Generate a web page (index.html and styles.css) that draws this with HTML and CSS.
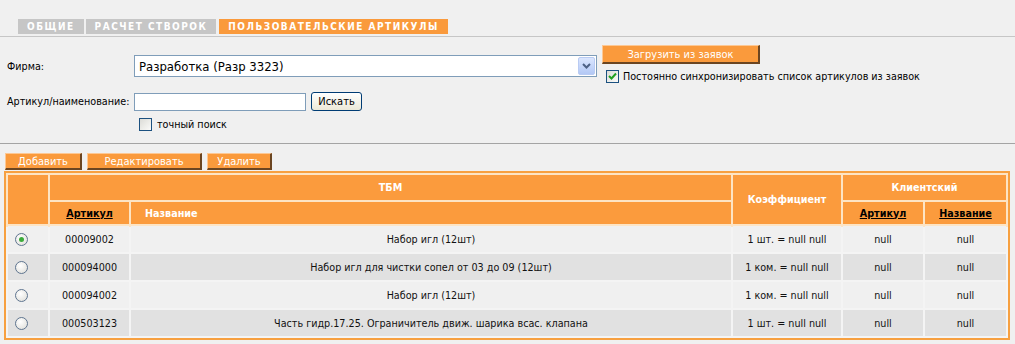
FILE: index.html
```html
<!DOCTYPE html>
<html lang="ru">
    <head>
        <meta charset="UTF-8">
        <title>Пользовательские артикулы</title>
        <link rel="stylesheet" href="styles.css">
    </head>
    <body>
        <div class="tabs">
            <span class="tab">Общие</span>
            <span class="tab">Расчет створок</span>
            <span class="tab active">Пользовательские артикулы</span>
        </div>

        <div class="filters">
            <div class="firm-row">
                <span class="label firm-label">Фирма:</span>
                <div class="select">
                    <span class="select-value">Разработка (Разр 3323)</span>
                    <span class="select-arrow">
                        <svg width="9" height="6" viewBox="0 0 9 6"><path d="M1 1 L4.5 4.5 L8 1" fill="none" stroke="#4d6185" stroke-width="2"/></svg>
                    </span>
                </div>
                <div class="sync">
                    <button class="btn load-btn">Загрузить из заявок</button>
                    <div class="check-line">
                        <span class="checkbox">
                            <svg width="11" height="11" viewBox="0 0 11 11"><path d="M2 5 L4.5 7.5 L9 2.5" fill="none" stroke="#21a121" stroke-width="2"/></svg>
                        </span>
                        Постоянно синхронизировать список артикулов из заявок
                    </div>
                </div>
            </div>
            <div class="search-row">
                <span class="label">Артикул/наименование:</span>
                <input class="text-input" type="text">
                <button class="xp-btn">Искать</button>
            </div>
            <div class="exact-row">
                <span class="checkbox"></span>
                точный поиск
            </div>
        </div>

        <div class="actions">
            <button class="btn add-btn">Добавить</button>
            <button class="btn edit-btn">Редактировать</button>
            <button class="btn del-btn">Удалить</button>
        </div>

        <table class="grid">
            <colgroup>
                <col class="c-radio">
                <col class="c-art">
                <col class="c-name">
                <col class="c-coef">
                <col class="c-cart">
                <col class="c-cname">
            </colgroup>
            <thead>
                <tr class="head-top">
                    <th rowspan="2"></th>
                    <th colspan="2">ТБМ</th>
                    <th rowspan="2">Коэффициент</th>
                    <th colspan="2">Клиентский</th>
                </tr>
                <tr class="head-sub">
                    <th><a href="#">Артикул</a></th>
                    <th class="left">Название</th>
                    <th><a href="#">Артикул</a></th>
                    <th><a href="#">Название</a></th>
                </tr>
            </thead>
            <tbody>
                <tr>
                    <td class="pick"><span class="radio checked"></span></td>
                    <td>00009002</td>
                    <td>Набор игл (12шт)</td>
                    <td>1 шт. = null null</td>
                    <td>null</td>
                    <td>null</td>
                </tr>
                <tr class="alt">
                    <td class="pick"><span class="radio"></span></td>
                    <td>000094000</td>
                    <td>Набор игл для чистки сопел от 03 до 09 (12шт)</td>
                    <td>1 ком. = null null</td>
                    <td>null</td>
                    <td>null</td>
                </tr>
                <tr>
                    <td class="pick"><span class="radio"></span></td>
                    <td>000094002</td>
                    <td>Набор игл (12шт)</td>
                    <td>1 ком. = null null</td>
                    <td>null</td>
                    <td>null</td>
                </tr>
                <tr class="alt">
                    <td class="pick"><span class="radio"></span></td>
                    <td>000503123</td>
                    <td>Часть гидр.17.25. Ограничитель движ. шарика всас. клапана</td>
                    <td>1 шт. = null null</td>
                    <td>null</td>
                    <td>null</td>
                </tr>
            </tbody>
        </table>
    </body>
</html>
```

FILE: styles.css
```css
body {
    margin: 0;
    background-color: #f0f0f0;
    font-family: "DejaVu Sans Condensed", "DejaVu Sans", sans-serif;
    font-size: 10.7px;
    color: #000;
}

/* tabs */
.tabs {
    display: flex;
    gap: 2px;
    height: 17px;
    padding: 19px 0 0 18px;
    border-bottom: 1px solid #c6c6c6;
}
.tab {
    height: 15px;
    line-height: 15px;
    padding: 0 9px;
    background-color: #c6c6c6;
    color: #fff;
    font-size: 10px;
    font-weight: bold;
    letter-spacing: 1.5px;
    text-transform: uppercase;
}
.tab.active {
    margin-left: 1px;
    background-color: #fa9a3c;
}

/* filter form */
.filters {
    height: 98px;
    padding: 8px 0 0 7px;
    border-bottom: 1px solid #a4a4a4;
}
.label {
    width: 127px;
}
.firm-row {
    display: flex;
    align-items: flex-start;
}
.firm-label {
    margin-top: 15px;
}
.select {
    display: flex;
    align-items: center;
    box-sizing: border-box;
    width: 463px;
    height: 22px;
    margin-top: 10px;
    padding-left: 4px;
    border: 1px solid #7f9db9;
    background-color: #fff;
    font-size: 13px;
}
.select-arrow {
    display: flex;
    align-items: center;
    justify-content: center;
    box-sizing: border-box;
    width: 17px;
    height: 18px;
    margin: 0 1px 0 auto;
    border: 1px solid #b9cbf3;
    border-radius: 2px;
    background: linear-gradient(#dbe6fe, #b3c8f5);
}
.sync {
    margin-left: 5px;
}
.check-line {
    display: flex;
    align-items: center;
    gap: 4px;
    margin-top: 6px;
    padding-left: 4px;
}
.checkbox {
    display: inline-flex;
    align-items: center;
    justify-content: center;
    box-sizing: border-box;
    width: 13px;
    height: 13px;
    border: 1px solid #1c5180;
    background: linear-gradient(135deg, #dcdcd7, #fbfbf9);
}
.search-row {
    display: flex;
    align-items: center;
    margin-top: 9px;
}
.text-input {
    box-sizing: border-box;
    width: 172px;
    height: 18px;
    margin: 0;
    border: 1px solid #7f9db9;
    background-color: #fff;
}
.xp-btn {
    box-sizing: border-box;
    width: 51px;
    height: 19px;
    margin-left: 5px;
    padding: 0;
    border: 1px solid #003c74;
    border-radius: 3px;
    background: linear-gradient(#ffffff, #ece9d8);
    font-family: inherit;
    font-size: 11px;
    color: #000;
}
.exact-row {
    display: flex;
    align-items: center;
    gap: 5px;
    margin: 7px 0 0 132px;
}

/* orange buttons */
.btn {
    box-sizing: border-box;
    height: 17px;
    padding: 0;
    border: 1px solid #fdc894;
    border-right: 2px solid #6b4521;
    border-bottom: 2px solid #6b4521;
    background-color: #fa9a3c;
    color: #fff;
    font-family: inherit;
    font-size: 11px;
}
.load-btn {
    width: 158px;
    height: 19px;
}
.actions {
    display: flex;
    gap: 5px;
    padding: 9px 0 0 5px;
}
.add-btn {
    width: 77px;
}
.edit-btn {
    width: 115px;
}
.del-btn {
    width: 65px;
}

/* table */
.grid {
    width: 1006px;
    margin: 1px 0 0 4px;
    table-layout: fixed;
    border: 2px solid #f7a040;
    border-spacing: 2px;
    background: linear-gradient(#fde4c4 0, #fde4c4 54px, #f4f4f4 54px);
}
.c-radio { width: 40px; }
.c-art { width: 79px; }
.c-name { width: 600px; }
.c-coef { width: 108px; }
.c-cart { width: 80px; }
.c-cname { width: 81px; }

.grid th {
    padding: 0;
    background-color: #fb9b3d;
    color: #fff;
    font-weight: bold;
    text-align: center;
}
.grid th.left {
    padding-left: 14px;
    text-align: left;
}
.grid th a {
    color: #000;
}
.head-top th {
    height: 25px;
}
.head-sub th {
    height: 22px;
}
.grid td {
    height: 26px;
    padding: 0;
    background-color: #f0f0f0;
    color: #111;
    text-align: center;
}
.grid tr.alt td {
    background-color: #e1e1e1;
}
.grid td.pick {
    padding-left: 7px;
    text-align: left;
}
.radio {
    display: inline-block;
    position: relative;
    box-sizing: border-box;
    width: 13px;
    height: 13px;
    vertical-align: middle;
    border: 1px solid #5f7590;
    border-radius: 50%;
    background: radial-gradient(circle at 40% 35%, #ffffff, #dddcd6);
}
.radio.checked::after {
    content: "";
    position: absolute;
    top: 3px;
    left: 3px;
    width: 5px;
    height: 5px;
    border-radius: 50%;
    background-color: #3bab3b;
}
```
